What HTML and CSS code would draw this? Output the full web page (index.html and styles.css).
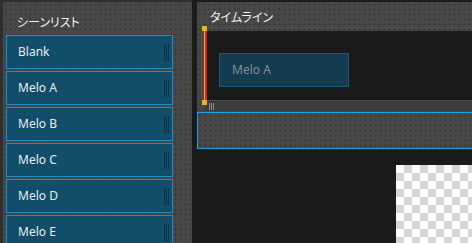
FILE: index.html
```html
<!DOCTYPE html>
<html lang="ja">
<head>
<meta charset="utf-8">
<title>Scene Editor</title>
<link rel="stylesheet" href="styles.css">
</head>
<body>
<div class="app">
  <section class="scene-panel tex">
    <div class="panel-title">シーンリスト</div>
    <ul class="scene-list">
      <li class="scene-item"><span class="label">Blank</span><span class="grip"><i></i><i></i><i></i></span></li>
      <li class="scene-item"><span class="label">Melo A</span><span class="grip"><i></i><i></i><i></i></span></li>
      <li class="scene-item"><span class="label">Melo B</span><span class="grip"><i></i><i></i><i></i></span></li>
      <li class="scene-item"><span class="label">Melo C</span><span class="grip"><i></i><i></i><i></i></span></li>
      <li class="scene-item"><span class="label">Melo D</span><span class="grip"><i></i><i></i><i></i></span></li>
      <li class="scene-item"><span class="label">Melo E</span><span class="grip"><i></i><i></i><i></i></span></li>
    </ul>
  </section>
  <div class="divider"></div>
  <section class="timeline-panel">
    <div class="tl-head tex">
      <div class="panel-title tl-title">タイムライン</div>
      <div class="tl-row">
        <div class="gutter"></div>
        <div class="tl-track">
          <div class="clip">Melo A</div>
        </div>
        <div class="playhead"><span class="ph-cap top"></span><span class="ph-cap bottom"></span></div>
      </div>
      <div class="tl-scroll">
        <div class="gutter"></div>
        <div class="scroll-bar"><span class="sgrip"><i></i><i></i><i></i></span></div>
      </div>
      <div class="tl-box tex"></div>
    </div>
    <div class="preview">
      <div class="checker"></div>
    </div>
  </section>
</div>
</body>
</html>
```

FILE: styles.css
```css
* { box-sizing: border-box; }
html, body { margin: 0; padding: 0; }
body {
  width: 472px;
  height: 243px;
  overflow: hidden;
  background: #2d2d2d;
  font-family: "Noto Sans", "Noto Sans CJK JP", sans-serif;
}
.app {
  display: flex;
  height: 243px;
  background: #2e2e2e;
}
.tex {
  background-color: #484848;
  background-image: radial-gradient(circle, #393939 0 0.8px, transparent 1.3px);
  background-size: 5px 5px;
}
.scene-panel {
  width: 189px;
  margin: 2px 0 0 3px;
  overflow: hidden;
}
.panel-title {
  flex: none;
  height: 33px;
  padding: 12px 0 0 14px;
  font-family: "Noto Sans CJK JP", sans-serif;
  font-feature-settings: "palt";
  font-size: 12px;
  line-height: 16px;
  color: #f0f0f0;
}
.scene-list {
  list-style: none;
  margin: 0;
  padding: 0 0 0 3px;
}
.scene-item {
  width: 167px;
  height: 34px;
  margin-bottom: 2px;
  border: 1px solid #1c8dc2;
  background: #124d69;
  display: flex;
  align-items: center;
  justify-content: space-between;
  padding: 0 3px 0 11px;
  color: #e6eef2;
  font-size: 12px;
  line-height: 16px;
}
.grip {
  display: flex;
  gap: 1px;
  height: 17px;
}
.grip i {
  display: block;
  width: 1px;
  height: 100%;
  background: #0b3146;
}
.divider {
  width: 5px;
  flex: none;
  background: #1b1b1b;
}
.timeline-panel {
  flex: 1;
  display: flex;
  flex-direction: column;
  background: #1b1b1b;
  min-width: 0;
}
.tl-head {
  flex: none;
  margin-top: 2px;
  display: flex;
  flex-direction: column;
}
.tl-title {
  height: 29px;
  padding: 7px 0 0 13px;
}
.tl-row {
  flex: none;
  position: relative;
  height: 69px;
  display: flex;
}
.gutter { width: 8px; flex: none; }
.tl-track {
  flex: 1;
  background: #1a1a1a;
  padding: 22px 0 0 14px;
}
.clip {
  width: 130px;
  height: 34px;
  border: 1px solid #1a5675;
  background: #143d51;
  color: #7f8f98;
  font-size: 12px;
  line-height: 16px;
  padding: 8px 0 0 12px;
}
.playhead {
  position: absolute;
  left: 8px;
  top: 0;
  width: 2px;
  height: 70px;
  background: #ee1b10;
  box-shadow: -1px 0 0 #f3b21c;
}
.ph-cap {
  position: absolute;
  left: -3px;
  width: 5px;
  height: 5px;
  background: #f3b21c;
}
.ph-cap.top { top: -5px; }
.ph-cap.bottom { top: 69px; }
.tl-scroll {
  flex: none;
  height: 11px;
  display: flex;
}
.scroll-bar {
  flex: 1;
  background: #3c3c3c;
  border-top: 1px solid #4d4d4d;
  padding: 2px 0 0 4px;
}
.sgrip {
  display: flex;
  gap: 1px;
  height: 7px;
}
.sgrip i {
  display: block;
  width: 1px;
  height: 100%;
  background: #8a8a8a;
}
.tl-box {
  flex: none;
  margin-top: 1px;
  width: calc(100% + 4px);
  height: 37px;
  border: 1px solid #1ea0e6;
}
.preview {
  flex: 1;
  background: #1a1a1a;
  padding: 16px 0 0 199px;
}
.checker {
  height: 100%;
  background: repeating-conic-gradient(#d5d5d5 0 25%, #ffffff 0 50%) 0 0 / 16px 16px;
}
```
